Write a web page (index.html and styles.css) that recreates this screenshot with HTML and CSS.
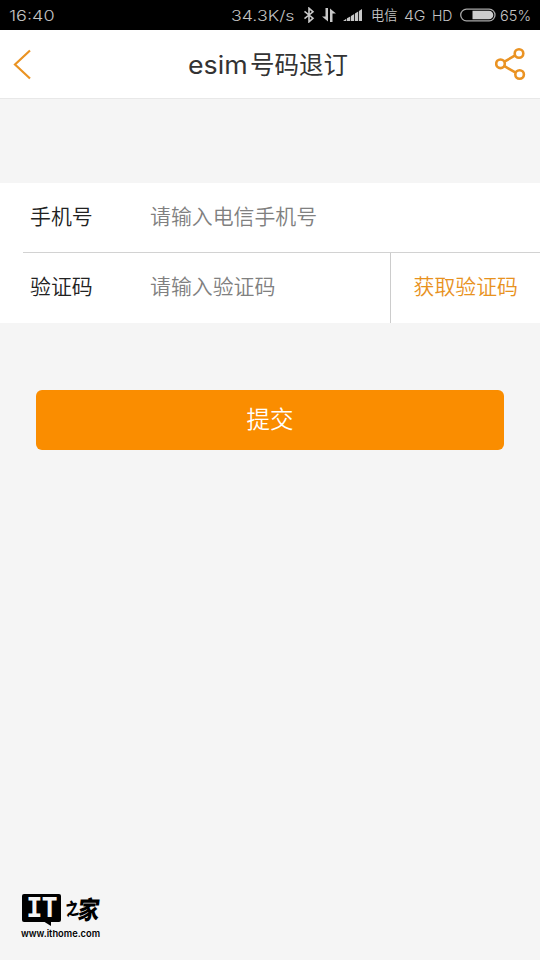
FILE: index.html
```html
<!DOCTYPE html>
<html lang="zh-CN">
<head>
<meta charset="utf-8">
<title>esim号码退订</title>
<link rel="stylesheet" href="styles.css">
</head>
<body>
<div class="status">
  <span class="clock"><span class="wide">16:40</span></span>
  <span class="speed"><span class="wide">34.3K/s</span></span>
  <svg class="bt" width="12" height="16" viewBox="0 0 12 16"><path d="M1.5 4.3 10 11.2 6 14.8V1.2L10 4.8 1.5 11.7"/></svg>
  <svg class="arrows" width="14" height="14" viewBox="0 0 14 14"><path d="M3.500 0H6V13.500L0 8.500H3.500ZM8 14V.500L14 5.500H10.500V14Z"/></svg>
  <svg class="signal" width="20" height="14" viewBox="0 0 20 14"><path d="M0 13 3.300 10.800V13ZM4 10.300 7.300 8.500V13H4ZM8 8 11.200 6V13H8ZM12 5.500 15.200 3.500V13H12ZM16 3 19 1V13H16Z"/></svg>
  <span class="carrier">电信</span>
  <span class="net"><span class="wide">4G</span></span>
  <span class="hd"><span class="wide">HD</span></span>
  <svg class="battery" width="36" height="14" viewBox="0 0 36 14"><rect class="shell" x=".7" y="1.200" width="34.300" height="11.600" rx="5.800"/><path class="charge" d="M12.500 2.700H29A4.300 4.300 0 0 1 29 11.300H12.500Z"/></svg>
  <span class="percent"><span class="wide">65%</span></span>
</div>
<header class="bar">
  <svg class="back" width="20" height="32" viewBox="0 0 20 32"><path d="M17 2.500 2 16.500 17 30.500"/></svg>
  <h1><span class="latin">esim</span><span>号码退订</span></h1>
  <svg class="share" width="32" height="34" viewBox="0 0 32 34"><path d="M9.500 14.600 19.700 8.700M9.500 19.200 20.200 25.400"/><circle cx="5.500" cy="16.800" r="4.300"/><circle cx="24" cy="6.500" r="4.300"/><circle cx="24.600" cy="27.500" r="4.300"/></svg>
</header>
<main>
  <form class="card">
    <div class="row"><span class="label">手机号</span><span class="hint">请输入电信手机号</span></div>
    <div class="row ruled"><span class="label">验证码</span><span class="hint">请输入验证码</span><span class="code">获取验证码</span></div>
  </form>
  <div class="submit">提交</div>
</main>
<footer class="brand">
  <div class="logo">
    <div class="badge"><span>IT</span><svg width="8" height="5" viewBox="0 0 8 5"><path d="M0 0H8V5Z"/></svg></div>
    <div class="home"><span class="zhi">之</span><span class="jia">家</span></div>
  </div>
  <div class="site"><span>www.ithome.com</span></div>
</footer>
</body>
</html>
```
FILE: styles.css
```css
* { box-sizing: border-box; }
body {
  margin: 0;
  height: 960px;
  display: flex;
  flex-direction: column;
  background: #f5f5f5;
  font-family: "Noto Sans CJK SC", sans-serif;
  font-weight: 350;
  overflow: hidden;
}
svg { display: block; flex: none; }
.status {
  height: 30px;
  display: flex;
  align-items: center;
  padding-left: 9px;
  background: #000;
  color: #c4c4c4;
  font: 350 14px/31px Inter, "Noto Sans CJK SC", sans-serif;
  white-space: nowrap;
}
.status > * { flex: none; }
.wide { display: inline-block; transform: scaleX(1.2); transform-origin: left; }
.clock { width: 222px; }
.clock .wide { transform: scaleX(1.29); }
.speed { width: 72px; }
.speed .wide { transform: scaleX(1.27); }
.bt { margin-right: 7px; fill: none; stroke: #c8c8c8; stroke-width: 1.6; }
.arrows { margin-right: 7px; fill: #c8c8c8; }
.signal { margin-right: 8px; fill: #c8c8c8; }
.carrier { width: 33px; font-size: 13.2px; font-weight: 350; line-height: 28px; }
.net { width: 28px; }
.net .wide { transform: scaleX(1.12); }
.hd { width: 28px; }
.hd .wide { transform: scaleX(1); }
.battery { margin-right: 4px; }
.percent .wide { transform: scaleX(1.04); }
.shell { fill: none; stroke: #a8a8a8; stroke-width: 1.3; }
.charge { fill: #ccc; }
.bar {
  height: 69px;
  display: flex;
  align-items: center;
  justify-content: space-between;
  padding: 0 13px;
  background: #fff;
  border-bottom: 1px solid #e8e8e8;
}
.back, .share { fill: none; stroke: #ea9323; stroke-width: 2.2; }
.share { stroke-width: 2.6; }
h1 {
  margin: 0 0 0 8px;
  display: flex;
  align-items: baseline;
  color: #333;
  font-size: 24.5px;
  font-weight: 400;
  line-height: 36px;
}
.latin { width: 62px; font-family: Inter, sans-serif; font-size: 25px; font-weight: 400; transform: scaleX(1.07); transform-origin: left; }
main { flex: 1; }
.card { margin-top: 84px; background: #fff; }
.row { display: flex; height: 69px; padding-left: 30px; font-size: 20.9px; line-height: 65px; }
.ruled { height: 71px; margin-left: 23px; padding-left: 7px; border-top: 1px solid #d2d2d2; line-height: 65px; }
.label { width: 120px; color: #222; }
.hint { flex: 1; color: #808080; }
.code { width: 150px; padding-left: 22.5px; border-left: 1px solid #ccc; color: #e8921e; }
.submit {
  height: 60px;
  margin: 67px 36px 0;
  border-radius: 6px;
  background: #fa8d00;
  color: #fff;
  font-size: 23.5px;
  line-height: 57px;
  text-align: center;
}
.brand { height: 66px; padding-left: 22px; color: #000; }
.logo { display: flex; height: 35px; }
.badge { position: relative; width: 39px; height: 28px; border-radius: 2px; background: #000; color: #f5f5f5; text-align: center; }
.badge span { display: block; font: 700 27px/28px "DejaVu Sans Mono", monospace; letter-spacing: -1px; }
.badge svg { position: absolute; left: 21px; top: 27px; }
.home { display: flex; padding-left: 5px; font-weight: 900; line-height: 29px; }
.zhi { width: 12px; font-size: 17px; transform: scaleX(.75) rotate(-8deg); transform-origin: left; }
.jia { font-size: 25px; transform: scaleX(.86) skewX(-8deg); transform-origin: left; }
.site { margin-left: -1px; font: 600 9.3px/10px Inter, sans-serif; white-space: nowrap; }
```
